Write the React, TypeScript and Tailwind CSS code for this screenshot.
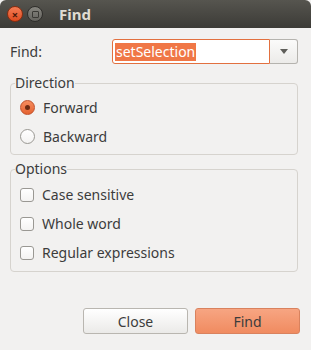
import React from 'react';

const Radio = ({ checked, label }: { checked?: boolean; label: string }) => (
  <div className="flex items-center h-[29px] pl-[9px]">
    {checked ? (
      <span className="w-[15px] h-[15px] rounded-full border border-[#c0502a] bg-gradient-to-b from-[#f58c5e] to-[#e5622f] flex items-center justify-center">
        <span className="w-[5px] h-[5px] rounded-full bg-[#6b2a12]" />
      </span>
    ) : (
      <span className="w-[15px] h-[15px] rounded-full border border-[#9a9893] bg-gradient-to-b from-[#ffffff] to-[#f4f3f2]" />
    )}
    <span className="ml-[8px]">{label}</span>
  </div>
);

const Check = ({ label }: { label: string }) => (
  <div className="flex items-center h-[29px] pl-[9px]">
    <span className="w-[14px] h-[14px] rounded-[3px] border border-[#9a9893] bg-gradient-to-b from-[#ffffff] to-[#f4f3f2]" />
    <span className="ml-[8px]">{label}</span>
  </div>
);

export default function App() {
  return (
    <div className="w-[311px] h-[350px] bg-[#f2f1f0] flex flex-col text-[14px] text-[#3c3c3c] font-['Noto_Sans',sans-serif]">
      <div className="h-[28px] shrink-0 rounded-t-[6px] bg-gradient-to-b from-[#56554f] to-[#3c3b37] flex items-center pl-[7px]">
        <span className="w-[16px] h-[16px] rounded-full bg-gradient-to-b from-[#f37c54] to-[#df4a1c] border border-[#8a2d10] flex items-center justify-center text-[#4a1a0a] text-[11px] leading-none font-bold">
          ×
        </span>
        <span className="ml-[4px] w-[16px] h-[16px] rounded-full bg-gradient-to-b from-[#86857f] to-[#64635e] border border-[#2f2e2b] flex items-center justify-center">
          <span className="w-[7px] h-[7px] rounded-[1px] border border-[#3a3935]" />
        </span>
        <span className="ml-[16px] font-bold text-[#dfdbd2] text-[15px]">Find</span>
      </div>

      <div className="flex flex-col px-[10px] pt-[11px] flex-1">
        <div className="flex items-center h-[25px]">
          <span className="w-[102px]">Find:</span>
          <div className="flex flex-1 h-[25px] mr-[3px]">
            <div className="flex-1 bg-white border border-[#e2703f] rounded-l-[3px] flex items-center pl-[2px]">
              <span className="bg-[#f07746] text-white leading-[18px] px-[1px]">setSelection</span>
            </div>
            <div className="w-[28px] border border-l-0 border-[#b5b3ae] rounded-r-[3px] bg-gradient-to-b from-[#fbfbfa] to-[#ecebe9] flex items-center justify-center">
              <svg width="8" height="5" viewBox="0 0 8 5">
                <path d="M0 0H8L4 5Z" fill="#5f5e5a" />
              </svg>
            </div>
          </div>
        </div>

        <fieldset className="mt-[11px] border border-[#d6d3ce] rounded-[4px] mr-[3px] pb-[3px] pt-[2px]">
          <legend className="ml-[4px] px-0 leading-[16px]">Direction</legend>
          <Radio checked label="Forward" />
          <Radio label="Backward" />
        </fieldset>

        <fieldset className="mt-[6px] border border-[#d6d3ce] rounded-[4px] mr-[3px] pb-[4px] pt-[3px]">
          <legend className="ml-[4px] px-0 leading-[16px]">Options</legend>
          <Check label="Case sensitive" />
          <Check label="Whole word" />
          <Check label="Regular expressions" />
        </fieldset>

        <div className="flex justify-end gap-[7px] mt-auto mb-[16px] mr-[1px]">
          <button className="w-[105px] h-[26px] rounded-[3px] border border-[#b9b6b0] bg-gradient-to-b from-[#ffffff] to-[#ebeae8] text-[#3c3c3c]">
            Close
          </button>
          <button className="w-[105px] h-[26px] rounded-[3px] border border-[#d9825e] bg-gradient-to-b from-[#f7a582] to-[#f08b60] text-[#3c3c3c]">
            Find
          </button>
        </div>
      </div>
    </div>
  );
}
